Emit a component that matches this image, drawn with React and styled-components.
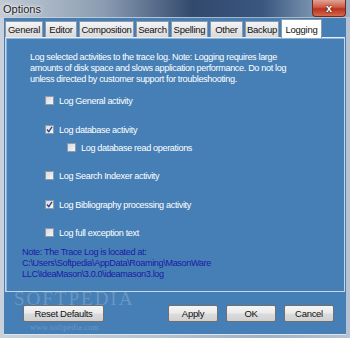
import React from "react";
import styled, { createGlobalStyle } from "styled-components";

const GlobalStyle = createGlobalStyle`
  html, body {
    margin: 0;
    padding: 0;
    background: #c5cdd6;
  }
  body {
    font-family: "Liberation Sans", Arial, sans-serif;
  }
`;

const Window = styled.div`
  position: relative;
  width: 350px;
  height: 338px;
  display: flex;
  flex-direction: column;
  background: linear-gradient(90deg, #c9d2dc 0%, #b4c2d1 45%, #9fb1c4 75%, #b5c3d2 100%);
  overflow: hidden;
`;

const TitleBar = styled.div`
  height: 18px;
  display: flex;
  align-items: center;
  justify-content: space-between;
  padding-left: 3px;
  background: linear-gradient(90deg, #c3cbd4 0%, #8a9cb2 30%, #33496d 55%, #3a5680 75%, #7d95b1 90%, #9eb2c7 100%);
`;

const Title = styled.span`
  font-size: 11px;
  color: #1b1b1b;
  text-shadow: 0 0 4px #ffffff, 0 0 2px #ffffff;
`;

const CloseButton = styled.div`
  width: 34px;
  height: 17px;
  margin-right: 4px;
  align-self: flex-start;
  border: 1px solid #6b2a22;
  border-top: none;
  border-radius: 0 0 4px 4px;
  background: linear-gradient(180deg, #e0a394 0%, #cf5a44 45%, #b8321c 55%, #d4684e 100%);
  display: flex;
  align-items: center;
  justify-content: center;
  color: #ffffff;
  font-size: 11px;
  font-weight: bold;
  text-shadow: 0 0 2px #000000;
  box-sizing: border-box;
`;

const Client = styled.div`
  flex: 1;
  margin: 1px 4px 4px 4px;
  background: #467fb5;
  display: flex;
  flex-direction: column;
  padding: 1px 1px 0 1px;
  border-bottom: 1px solid #dfe6ee;
`;

const TabStrip = styled.div`
  display: flex;
  align-items: flex-end;
  gap: 2px;
  height: 18px;
`;

const Tab = styled.div`
  width: ${(p) => p.$w}px;
  height: ${(p) => (p.$active ? "19px" : "16px")};
  display: flex;
  align-items: center;
  justify-content: center;
  font-size: 9.5px;
  letter-spacing: -0.25px;
  color: #111111;
  background: ${(p) =>
    p.$active ? "#ffffff" : "linear-gradient(180deg, #f4f4f4 0%, #e6e6e6 50%, #dadada 100%)"};
  border: 1px solid #8c9aa8;
  border-bottom: none;
  box-sizing: border-box;
  margin-bottom: ${(p) => (p.$active ? "-1px" : "0")};
  position: relative;
  z-index: ${(p) => (p.$active ? 1 : 0)};
`;

const Panel = styled.div`
  height: 255px;
  box-sizing: border-box;
  border: 1px solid #c7d7e8;
  border-top-color: #e6eef6;
  box-shadow: inset 1px 1px 0 #8fb2d4;
  padding: 14px 12px 0 24px;
  display: flex;
  flex-direction: column;
  color: #ffffff;
  font-size: 9.1px;
  letter-spacing: -0.35px;
`;

const Intro = styled.p`
  margin: 0 0 10px 0;
  line-height: 11px;
  white-space: nowrap;
`;

const Option = styled.label`
  display: flex;
  align-items: center;
  gap: 5px;
  height: 11px;
  margin-left: ${(p) => (p.$indent ? "37px" : "15px")};
  margin-bottom: ${(p) => p.$gap}px;
`;

const Box = styled.span`
  width: 9px;
  height: 9px;
  flex: none;
  box-sizing: border-box;
  border: 1px solid #8e9aa6;
  background: linear-gradient(135deg, #d6dadf 0%, #f6f7f8 100%);
  display: flex;
  align-items: center;
  justify-content: center;
`;

const Note = styled.div`
  margin: 0 0 0 -8px;
  color: #1a1aa6;
  line-height: 11px;
  white-space: nowrap;
`;

const ButtonRow = styled.div`
  display: flex;
  align-items: center;
  height: 42px;
  padding: 0 11px 0 18px;
`;

const Button = styled.div`
  width: ${(p) => p.$w}px;
  height: 17px;
  box-sizing: border-box;
  margin-left: ${(p) => p.$ml || 0}px;
  border: 1px solid #707070;
  border-radius: 2px;
  background: linear-gradient(180deg, #f5f5f5 0%, #ebebeb 48%, #dcdcdc 52%, #d0d0d0 100%);
  display: flex;
  align-items: center;
  justify-content: center;
  font-size: 9.5px;
  letter-spacing: -0.3px;
  color: #111111;
  position: relative;
  z-index: 1;
`;

const Watermark = styled.div`
  position: absolute;
  left: ${(p) => p.$left}px;
  top: ${(p) => p.$top}px;
  font-family: "Liberation Serif", serif;
  font-size: ${(p) => p.$size}px;
  line-height: ${(p) => p.$size * 0.75}px;
  letter-spacing: ${(p) => p.$ls}px;
  color: rgba(255, 255, 255, 0.2);
  pointer-events: none;
`;

function Check({ checked }) {
  return (
    <Box>
      {checked && (
        <svg width="7" height="7" viewBox="0 0 7 7">
          <path d="M1 3.5 L2.8 5.6 L6 0.8" fill="none" stroke="#2a3f8a" strokeWidth="1.3" />
        </svg>
      )}
    </Box>
  );
}

const tabs = [
  ["General", 38],
  ["Editor", 32],
  ["Composition", 55],
  ["Search", 33],
  ["Spelling", 37],
  ["Other", 33],
  ["Backup", 34],
];

export default function App() {
  return (
    <>
      <GlobalStyle />
      <Window>
        <TitleBar>
          <Title>Options</Title>
          <CloseButton>x</CloseButton>
        </TitleBar>
        <Client>
          <TabStrip>
            {tabs.map(([t, w]) => (
              <Tab key={t} $w={w}>
                {t}
              </Tab>
            ))}
            <Tab $active $w={41}>
              Logging
            </Tab>
          </TabStrip>
          <Panel>
            <Intro>
              Log selected activities to the trace log. Note: Logging requires large
              <br />
              amounts of disk space and slows application performance. Do not log
              <br />
              unless directed by customer support for troubleshooting.
            </Intro>
            <Option $gap={18}>
              <Check />
              Log General activity
            </Option>
            <Option $gap={7}>
              <Check checked />
              Log database activity
            </Option>
            <Option $indent $gap={17}>
              <Check />
              Log database read operations
            </Option>
            <Option $gap={18}>
              <Check />
              Log Search Indexer activity
            </Option>
            <Option $gap={17}>
              <Check checked />
              Log Bibliography processing activity
            </Option>
            <Option $gap={9}>
              <Check />
              Log full exception text
            </Option>
            <Note>
              Note: The Trace Log is located at:
              <br />
              C:\Users\Softpedia\AppData\Roaming\MasonWare
              <br />
              LLC\IdeaMason\3.0.0\ideamason3.log
            </Note>
          </Panel>
          <ButtonRow>
            <Button $w={81}>Reset Defaults</Button>
            <Button $w={50} $ml={64}>
              Apply
            </Button>
            <Button $w={50} $ml={8}>
              OK
            </Button>
            <Button $w={50} $ml={8}>
              Cancel
            </Button>
          </ButtonRow>
        </Client>
        <Watermark $left={14} $top={292} $size={19} $ls={2}>
          SOFTPEDIA
        </Watermark>
        <Watermark $left={30} $top={325} $size={8} $ls={0.3}>
          www.softpedia.com
        </Watermark>
      </Window>
    </>
  );
}
